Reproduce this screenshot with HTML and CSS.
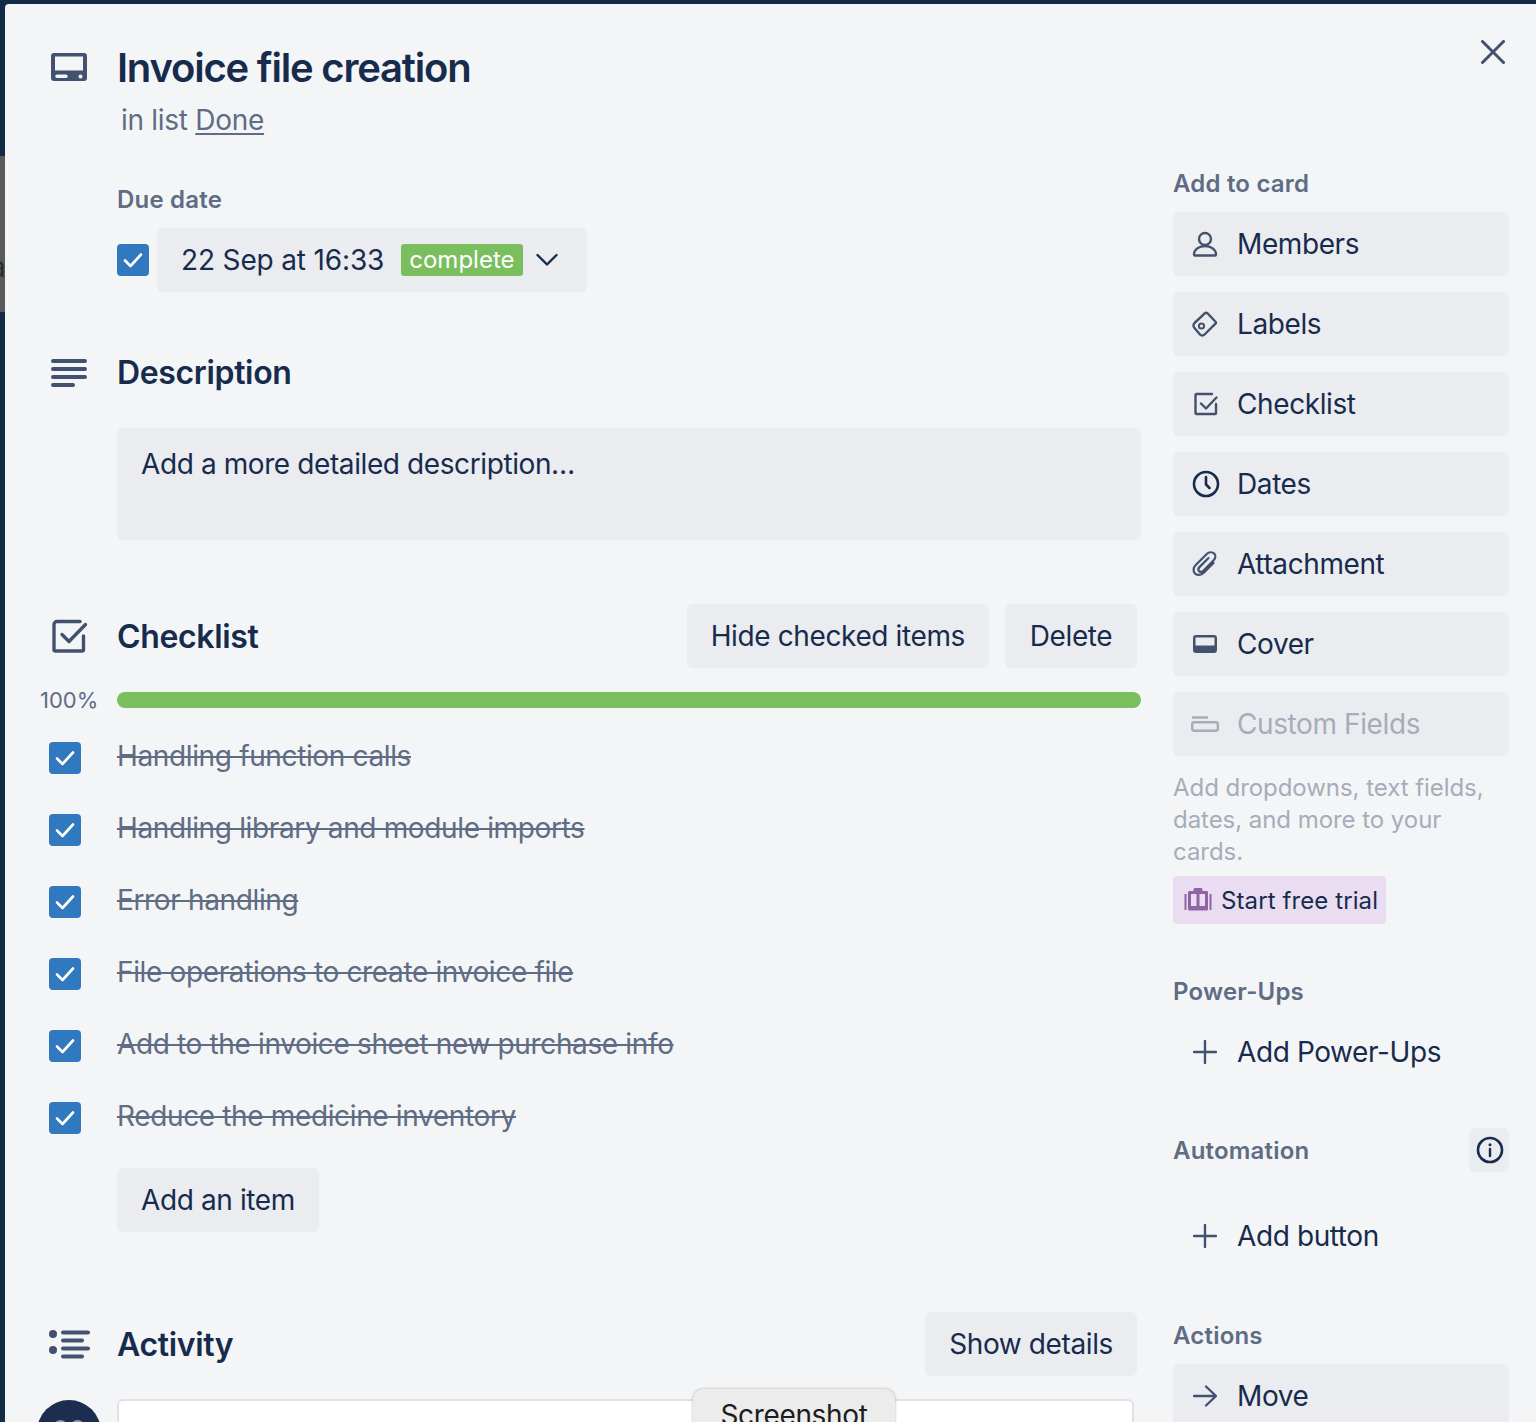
FILE: index.html
```html
<!DOCTYPE html>
<html lang="en">
<head>
<meta charset="utf-8">
<title>Invoice file creation</title>
<link rel="stylesheet" href="styles.css">
</head>
<body>
<div class="board-peek"><span class="board-letter">a</span></div>
<div class="modal">
  <button class="close" aria-label="Close">
    <svg width="24" height="24" viewBox="0 0 24 24"><path d="M1.500 1.500 22.500 22.500M22.500 1.500 1.500 22.500" stroke="#42526e" stroke-width="3" stroke-linecap="round"/></svg>
  </button>
  <div class="main">
    <div class="row title-row">
      <div class="gutter">
        <svg class="big-icon" width="38" height="30" viewBox="0 0 38 30"><path fill-rule="evenodd" d="M4 1h30a3 3 0 0 1 3 3v22a3 3 0 0 1-3 3H4a3 3 0 0 1-3-3V4a3 3 0 0 1 3-3ZM5 4.500v14h28v-14ZM7 22.500a1.500 1.500 0 0 0 0 3.500h9a1.750 1.750 0 0 0 0-3.500ZM28.500 24.500a2 2 0 1 0 4 0 2 2 0 1 0-4 0Z" fill="#42526e"/></svg>
      </div>
      <div>
        <h1 class="title">Invoice file creation</h1>
        <p class="in-list">in list <a class="list-link">Done</a></p>
      </div>
    </div>

    <div class="row due-row">
      <div class="gutter"></div>
      <div>
        <h3 class="label">Due date</h3>
        <div class="due-controls">
          <span class="check"><svg width="32" height="32" viewBox="0 0 32 32"><path d="M8 16.500 13.500 22 24 10.500" fill="none" stroke="#fff" stroke-width="2.600" stroke-linecap="round" stroke-linejoin="round"/></svg></span>
          <button class="btn date-btn">22 Sep at 16:33<span class="complete">complete</span>
            <svg class="chevron" width="24" height="16" viewBox="0 0 24 16"><path d="M2.500 3 12 12.500 21.500 3" fill="none" stroke="#172b4d" stroke-width="2.400" stroke-linecap="round" stroke-linejoin="round"/></svg>
          </button>
        </div>
      </div>
    </div>

    <div class="row heading-row desc-head">
      <div class="gutter">
        <svg class="big-icon" width="38" height="30" viewBox="0 0 38 30"><path d="M3 3h32M3 11h32M3 19h32M3 27h20" stroke="#42526e" stroke-width="4" stroke-linecap="round"/></svg>
      </div>
      <h2 class="heading">Description</h2>
    </div>
    <div class="row">
      <div class="gutter"></div>
      <div class="desc-box">Add a more detailed description…</div>
    </div>

    <div class="row heading-row check-head">
      <div class="gutter">
        <svg class="big-icon check-icon" width="36" height="34" viewBox="0 0 36 34"><path d="M28 2.500H5a3 3 0 0 0-3 3v25a1.500 1.500 0 0 0 1.500 1.500H30a1.500 1.500 0 0 0 1.500-1.500V17" fill="none" stroke="#42526e" stroke-width="3.400" stroke-linecap="round" stroke-linejoin="round"/><path d="M10 15.500 17 22.500 33.500 5.500" fill="none" stroke="#42526e" stroke-width="3.400" stroke-linecap="round" stroke-linejoin="round"/></svg>
      </div>
      <div class="heading-line">
        <h2 class="heading">Checklist</h2>
        <div class="heading-actions">
          <button class="btn">Hide checked items</button>
          <button class="btn delete-btn">Delete</button>
        </div>
      </div>
    </div>

    <div class="row progress-row">
      <div class="percent">100%</div>
      <div class="bar"></div>
    </div>

    <ul class="items">
      <li class="item"><span class="check"><svg width="32" height="32" viewBox="0 0 32 32"><path d="M8 16.500 13.500 22 24 10.500" fill="none" stroke="#fff" stroke-width="2.600" stroke-linecap="round" stroke-linejoin="round"/></svg></span><span class="item-text">Handling function calls</span></li>
      <li class="item"><span class="check"><svg width="32" height="32" viewBox="0 0 32 32"><path d="M8 16.500 13.500 22 24 10.500" fill="none" stroke="#fff" stroke-width="2.600" stroke-linecap="round" stroke-linejoin="round"/></svg></span><span class="item-text">Handling library and module imports</span></li>
      <li class="item"><span class="check"><svg width="32" height="32" viewBox="0 0 32 32"><path d="M8 16.500 13.500 22 24 10.500" fill="none" stroke="#fff" stroke-width="2.600" stroke-linecap="round" stroke-linejoin="round"/></svg></span><span class="item-text">Error handling</span></li>
      <li class="item"><span class="check"><svg width="32" height="32" viewBox="0 0 32 32"><path d="M8 16.500 13.500 22 24 10.500" fill="none" stroke="#fff" stroke-width="2.600" stroke-linecap="round" stroke-linejoin="round"/></svg></span><span class="item-text">File operations to create invoice file</span></li>
      <li class="item"><span class="check"><svg width="32" height="32" viewBox="0 0 32 32"><path d="M8 16.500 13.500 22 24 10.500" fill="none" stroke="#fff" stroke-width="2.600" stroke-linecap="round" stroke-linejoin="round"/></svg></span><span class="item-text">Add to the invoice sheet new purchase info</span></li>
      <li class="item"><span class="check"><svg width="32" height="32" viewBox="0 0 32 32"><path d="M8 16.500 13.500 22 24 10.500" fill="none" stroke="#fff" stroke-width="2.600" stroke-linecap="round" stroke-linejoin="round"/></svg></span><span class="item-text">Reduce the medicine inventory</span></li>
    </ul>

    <div class="row add-item-row">
      <div class="gutter"></div>
      <div><button class="btn">Add an item</button></div>
    </div>

    <div class="row heading-row activity-head">
      <div class="gutter">
        <svg class="big-icon" width="42" height="30" viewBox="0 0 42 30"><circle cx="5" cy="5" r="4" fill="#42526e"/><circle cx="5" cy="21" r="4" fill="#42526e"/><path d="M15 3.500h25M15 11.500h19M15 19.500h25M15 27.500h19" stroke="#42526e" stroke-width="4" stroke-linecap="round"/></svg>
      </div>
      <div class="heading-line">
        <h2 class="heading">Activity</h2>
        <div class="heading-actions"><button class="btn">Show details</button></div>
      </div>
    </div>

    <div class="row comment-row">
      <div class="avatar-cell"><div class="avatar"><span class="avatar-eye"></span><span class="avatar-eye"></span></div></div>
      <div class="comment-box"></div>
    </div>
  </div>

  <aside class="side">
    <h3 class="label side-first">Add to card</h3>
    <div class="side-list">
      <button class="side-btn"><svg class="side-icon" width="26" height="26" viewBox="0 0 26 26"><circle cx="13" cy="8" r="6" fill="none" stroke="#42526e" stroke-width="2.400"/><path d="M2 23.500c0-5 5-8.500 11-8.500s11 3.500 11 8.500c0 .6-.4 1-1 1H3c-.6 0-1-.4-1-1Z" fill="none" stroke="#42526e" stroke-width="2.400"/></svg>Members</button>
      <button class="side-btn"><svg class="side-icon" width="26" height="26" viewBox="0 0 26 26"><path d="M13 2.200a2 2 0 0 1 2.500 0l8 8.500a1.500 1.500 0 0 1 0 2L12.500 23.500a3 3 0 0 1-4.500 0L2.500 17a3.500 3.500 0 0 1 0-5Z" fill="none" stroke="#42526e" stroke-width="2.400" stroke-linejoin="round"/><circle cx="9.500" cy="15" r="2.600" fill="none" stroke="#42526e" stroke-width="2"/></svg>Labels</button>
      <button class="side-btn"><svg class="side-icon" width="26" height="26" viewBox="0 0 26 26"><path d="M20 3H4.500a1 1 0 0 0-1 1v18a1 1 0 0 0 1 1H23a1 1 0 0 0 1-1v-9" fill="none" stroke="#42526e" stroke-width="2.400" stroke-linecap="round"/><path d="M9 12.500 14 17.500 24.500 6.500" fill="none" stroke="#42526e" stroke-width="2.400" stroke-linecap="round" stroke-linejoin="round"/></svg>Checklist</button>
      <button class="side-btn"><svg class="side-icon shift" width="28" height="28" viewBox="0 0 28 28"><circle cx="14" cy="14" r="12" fill="none" stroke="#172b4d" stroke-width="2.600"/><path d="M14 7v7.500l3.500 3.500" fill="none" stroke="#172b4d" stroke-width="2.600" stroke-linecap="round"/></svg>Dates</button>
      <button class="side-btn"><svg class="side-icon" width="26" height="26" viewBox="0 0 26 26"><path d="M21.500 12 12 21.500c-3 3-7.500 3-9.200.8C1 20.200 1.200 16.500 3.500 14.200L15 2.800c2-2 5.500-2 7.200-.2 1.700 1.900 1.400 4.800-.5 6.700L11.300 19.800c-1.300 1.200-3.200 1.300-4.200.3s-.9-2.800.3-4L16.500 7" fill="none" stroke="#42526e" stroke-width="2.200" stroke-linecap="round"/></svg>Attachment</button>
      <button class="side-btn"><svg class="side-icon" width="24" height="18" viewBox="0 0 24 18"><path fill-rule="evenodd" d="M3 0h18a3 3 0 0 1 3 3v12a3 3 0 0 1-3 3H3a3 3 0 0 1-3-3V3a3 3 0 0 1 3-3Zm-.5 2.500v8h19v-8Z" fill="#42526e"/></svg>Cover</button>
      <button class="side-btn disabled"><svg class="side-icon" width="28" height="16" viewBox="0 0 28 16"><path d="M2 1.500h14" stroke="#a5adba" stroke-width="2.400" stroke-linecap="round"/><rect x="1.200" y="6.200" width="25.600" height="8.600" rx="2" fill="none" stroke="#a5adba" stroke-width="2.400"/></svg>Custom Fields</button>
    </div>
    <p class="upsell">Add dropdowns, text fields, dates, and more to your cards.</p>
    <button class="trial"><svg class="trial-icon" width="28" height="24" viewBox="0 0 28 24"><path d="M1.500 6v16M26.500 6v16" stroke="#8f64a5" stroke-width="2"/><path fill-rule="evenodd" d="M9.500 3V1.500A1.500 1.500 0 0 1 11 0h6a1.500 1.500 0 0 1 1.500 1.500V3H23a1.500 1.500 0 0 1 1 1v17a1.500 1.500 0 0 1-1.500 1.500h-17A1.500 1.500 0 0 1 4 21V4.500A1.500 1.500 0 0 1 5.500 3Zm-2.500 3v12h5.500V6Zm8.500 0v12H21V6Z" fill="#8f64a5"/></svg>Start free trial</button>

    <h3 class="label side-powerups">Power-Ups</h3>
    <button class="side-btn plain"><svg class="side-icon" width="24" height="24" viewBox="0 0 24 24"><path d="M12 1v22M1 12h22" stroke="#42526e" stroke-width="2.400" stroke-linecap="round"/></svg>Add Power-Ups</button>

    <div class="auto-head">
      <h3 class="label">Automation</h3>
      <button class="info"><svg width="28" height="28" viewBox="0 0 28 28"><circle cx="14" cy="14" r="12" fill="none" stroke="#172b4d" stroke-width="2.600"/><path d="M14 13v7" stroke="#172b4d" stroke-width="2.400" stroke-linecap="round"/><circle cx="14" cy="8.800" r="1.500" fill="#172b4d"/></svg></button>
    </div>
    <button class="side-btn plain add-button"><svg class="side-icon" width="24" height="24" viewBox="0 0 24 24"><path d="M12 1v22M1 12h22" stroke="#42526e" stroke-width="2.400" stroke-linecap="round"/></svg>Add button</button>

    <h3 class="label side-actions">Actions</h3>
    <button class="side-btn"><svg class="side-icon" width="24" height="22" viewBox="0 0 24 22"><path d="M1 11h22M13 1.500 23 11 13 20.500" fill="none" stroke="#42526e" stroke-width="2.400" stroke-linecap="round" stroke-linejoin="round"/></svg>Move</button>
  </aside>

  <div class="tooltip">Screenshot</div>
</div>
</body>
</html>
```
FILE: styles.css
```css
* { box-sizing: border-box; }
html, body { margin: 0; height: 1422px; overflow: hidden; }
body {
  background: #122c48;
  font-family: Inter, "Noto Sans", sans-serif;
  color: #172b4d;
  padding: 4px 0 0 5px;
  position: relative;
}
h1, h2, h3, p, ul { margin: 0; padding: 0; }
button { font: inherit; color: inherit; border: 0; cursor: pointer; }

.board-peek {
  position: absolute;
  left: 0;
  top: 156px;
  width: 5px;
  height: 156px;
  background: #5a5a5a;
  overflow: hidden;
}
.board-letter {
  position: absolute;
  left: -10px;
  top: 94px;
  font-size: 28px;
  color: #2d2d2d;
}

.modal {
  position: relative;
  display: flex;
  align-items: flex-start;
  height: 1418px;
  background: #f4f5f7;
  border-radius: 4px 0 0 0;
  overflow: hidden;
}

.close {
  position: absolute;
  left: 1476px;
  top: 36px;
  padding: 0;
  background: none;
  line-height: 0;
}

.main { width: 1136px; flex: none; }
.row { display: grid; grid-template-columns: 112px 1fr; }
.gutter { display: flex; justify-content: center; align-items: flex-start; padding-left: 16px; }
.big-icon { display: block; }

.title-row { padding-top: 40px; }
.title-row .gutter { padding-top: 8px; }
.title { font-size: 40px; line-height: 48px; font-weight: 600; letter-spacing: -1.2px; }
.in-list { font-size: 28px; line-height: 40px; color: #5e6c84; margin: 8px 0 0 4px; letter-spacing: -0.28px; }
.list-link { text-decoration: underline; text-underline-offset: 3px; }

.due-row { margin-top: 44px; }
.label { font-size: 24px; line-height: 32px; font-weight: 600; color: #5e6c84; letter-spacing: 0.2px; }
.due-controls { display: flex; align-items: center; gap: 8px; margin-top: 12px; }

.check {
  display: block;
  flex: none;
  width: 32px;
  height: 32px;
  border-radius: 4px;
  background: #3179bf;
  line-height: 0;
}

.btn {
  height: 64px;
  padding: 0 24px;
  background: #ebecf0;
  border-radius: 6px;
  font-size: 28px;
  line-height: 40px;
  letter-spacing: -0.38px;
}
.delete-btn { min-width: 132px; padding: 0; }
.date-btn { display: flex; align-items: center; letter-spacing: -0.15px; padding-right: 28px; }
.complete {
  margin-left: 17px;
  padding: 0 8px;
  height: 32px;
  line-height: 32px;
  background: #7bbe5e;
  color: #fff;
  border-radius: 3px;
  font-size: 24px;
  letter-spacing: 0;
}
.chevron { margin-left: 12px; }

.heading-row { align-items: center; }
.heading { font-size: 32px; line-height: 40px; font-weight: 600; letter-spacing: -0.35px; }
.heading-line { display: flex; justify-content: space-between; align-items: center; padding-right: 4px; }
.heading-line .heading { padding-top: 2px; }
.heading-actions { display: flex; gap: 16px; }

.desc-head { margin-top: 61px; }
.desc-box {
  margin-top: 35px;
  height: 112px;
  padding: 16px 24px;
  background: #ebecf0;
  border-radius: 6px;
  font-size: 28px;
  line-height: 40px;
  letter-spacing: -0.4px;
}

.check-head { margin-top: 64px; }
.check-icon { margin-left: 2px; }

.progress-row { margin-top: 24px; align-items: center; }
.percent { font-size: 22px; line-height: 16px; color: #5e6c84; padding-left: 35px; }
.bar { height: 16px; background: #7bbe5e; border-radius: 8px; }

.items { list-style: none; margin-top: 12px; }
.item {
  display: grid;
  align-items: center;
  height: 72px;
  padding-left: 44px;
  grid-template-columns: 68px 1fr;
}
.item .check { margin-top: 4px; }
.item-text { font-size: 28px; line-height: 40px; color: #5e6c84; text-decoration: line-through; letter-spacing: -0.36px; }

.add-item-row { margin-top: 16px; }
.activity-head { margin-top: 80px; }

.comment-row { margin-top: 23px; }
.avatar-cell { padding-left: 32px; }
.avatar {
  position: relative;
  width: 64px;
  height: 64px;
  border-radius: 50%;
  background: #1c2d4f;
  margin-top: 1px;
}
.avatar-eye {
  position: absolute;
  top: 20px;
  width: 13px;
  height: 8px;
  border-radius: 6px 6px 0 0;
  background: #8e97a8;
}
.avatar-eye:first-child { left: 17px; }
.avatar-eye:last-child { right: 17px; }
.comment-box {
  width: 1017px;
  height: 120px;
  background: #fff;
  border: 2px solid #dfe1e6;
  border-radius: 6px;
}

.side { width: 336px; flex: none; margin-left: 32px; padding-top: 164px; }
.side-list { display: flex; flex-direction: column; gap: 16px; margin-top: 12px; }
.side-btn {
  display: flex;
  align-items: center;
  width: 100%;
  height: 64px;
  padding: 0 0 0 64px;
  background: #ebecf0;
  border-radius: 6px;
  font-size: 28px;
  letter-spacing: -0.4px;
  text-align: left;
  position: relative;
}
.side-icon { position: absolute; left: 32px; top: 50%; transform: translate(-50%, -50%); }
.side-icon.shift { left: 33px; }
.side-btn.disabled { color: #a5adba; }
.side-btn.plain { background: none; }

.upsell { margin-top: 16px; font-size: 24px; line-height: 32px; color: #a5adba; letter-spacing: -0.05px; }
.trial {
  display: flex;
  align-items: center;
  height: 48px;
  padding: 0 8px 0 11px;
  gap: 9px;
  margin-top: 8px;
  background: #eadcf1;
  border-radius: 4px;
  font-size: 24px;
  letter-spacing: 0.1px;
}

.side-powerups { margin-top: 52px; }
.side-powerups + .side-btn { margin-top: 12px; }
.auto-head { display: flex; justify-content: space-between; align-items: center; margin-top: 44px; }
.auto-head .label { padding-top: 2px; }
.info {
  width: 40px;
  height: 44px;
  padding: 0 0 0 2px;
  background: #ebecf0;
  border-radius: 6px;
  line-height: 0;
  display: flex;
  justify-content: center;
  align-items: center;
}
.add-button { margin-top: 32px; }
.side-actions { margin-top: 52px; }
.side-actions + .side-btn { margin-top: 12px; }

.tooltip {
  position: absolute;
  left: 688px;
  top: 1385px;
  width: 202px;
  height: 60px;
  padding-top: 6px;
  text-align: center;
  background: #ececec;
  border-radius: 10px;
  box-shadow: 0 0 3px rgba(0, 0, 0, .3);
  font-size: 28px;
  line-height: 40px;
  letter-spacing: -0.35px;
  color: #1d1d1d;
}
```
